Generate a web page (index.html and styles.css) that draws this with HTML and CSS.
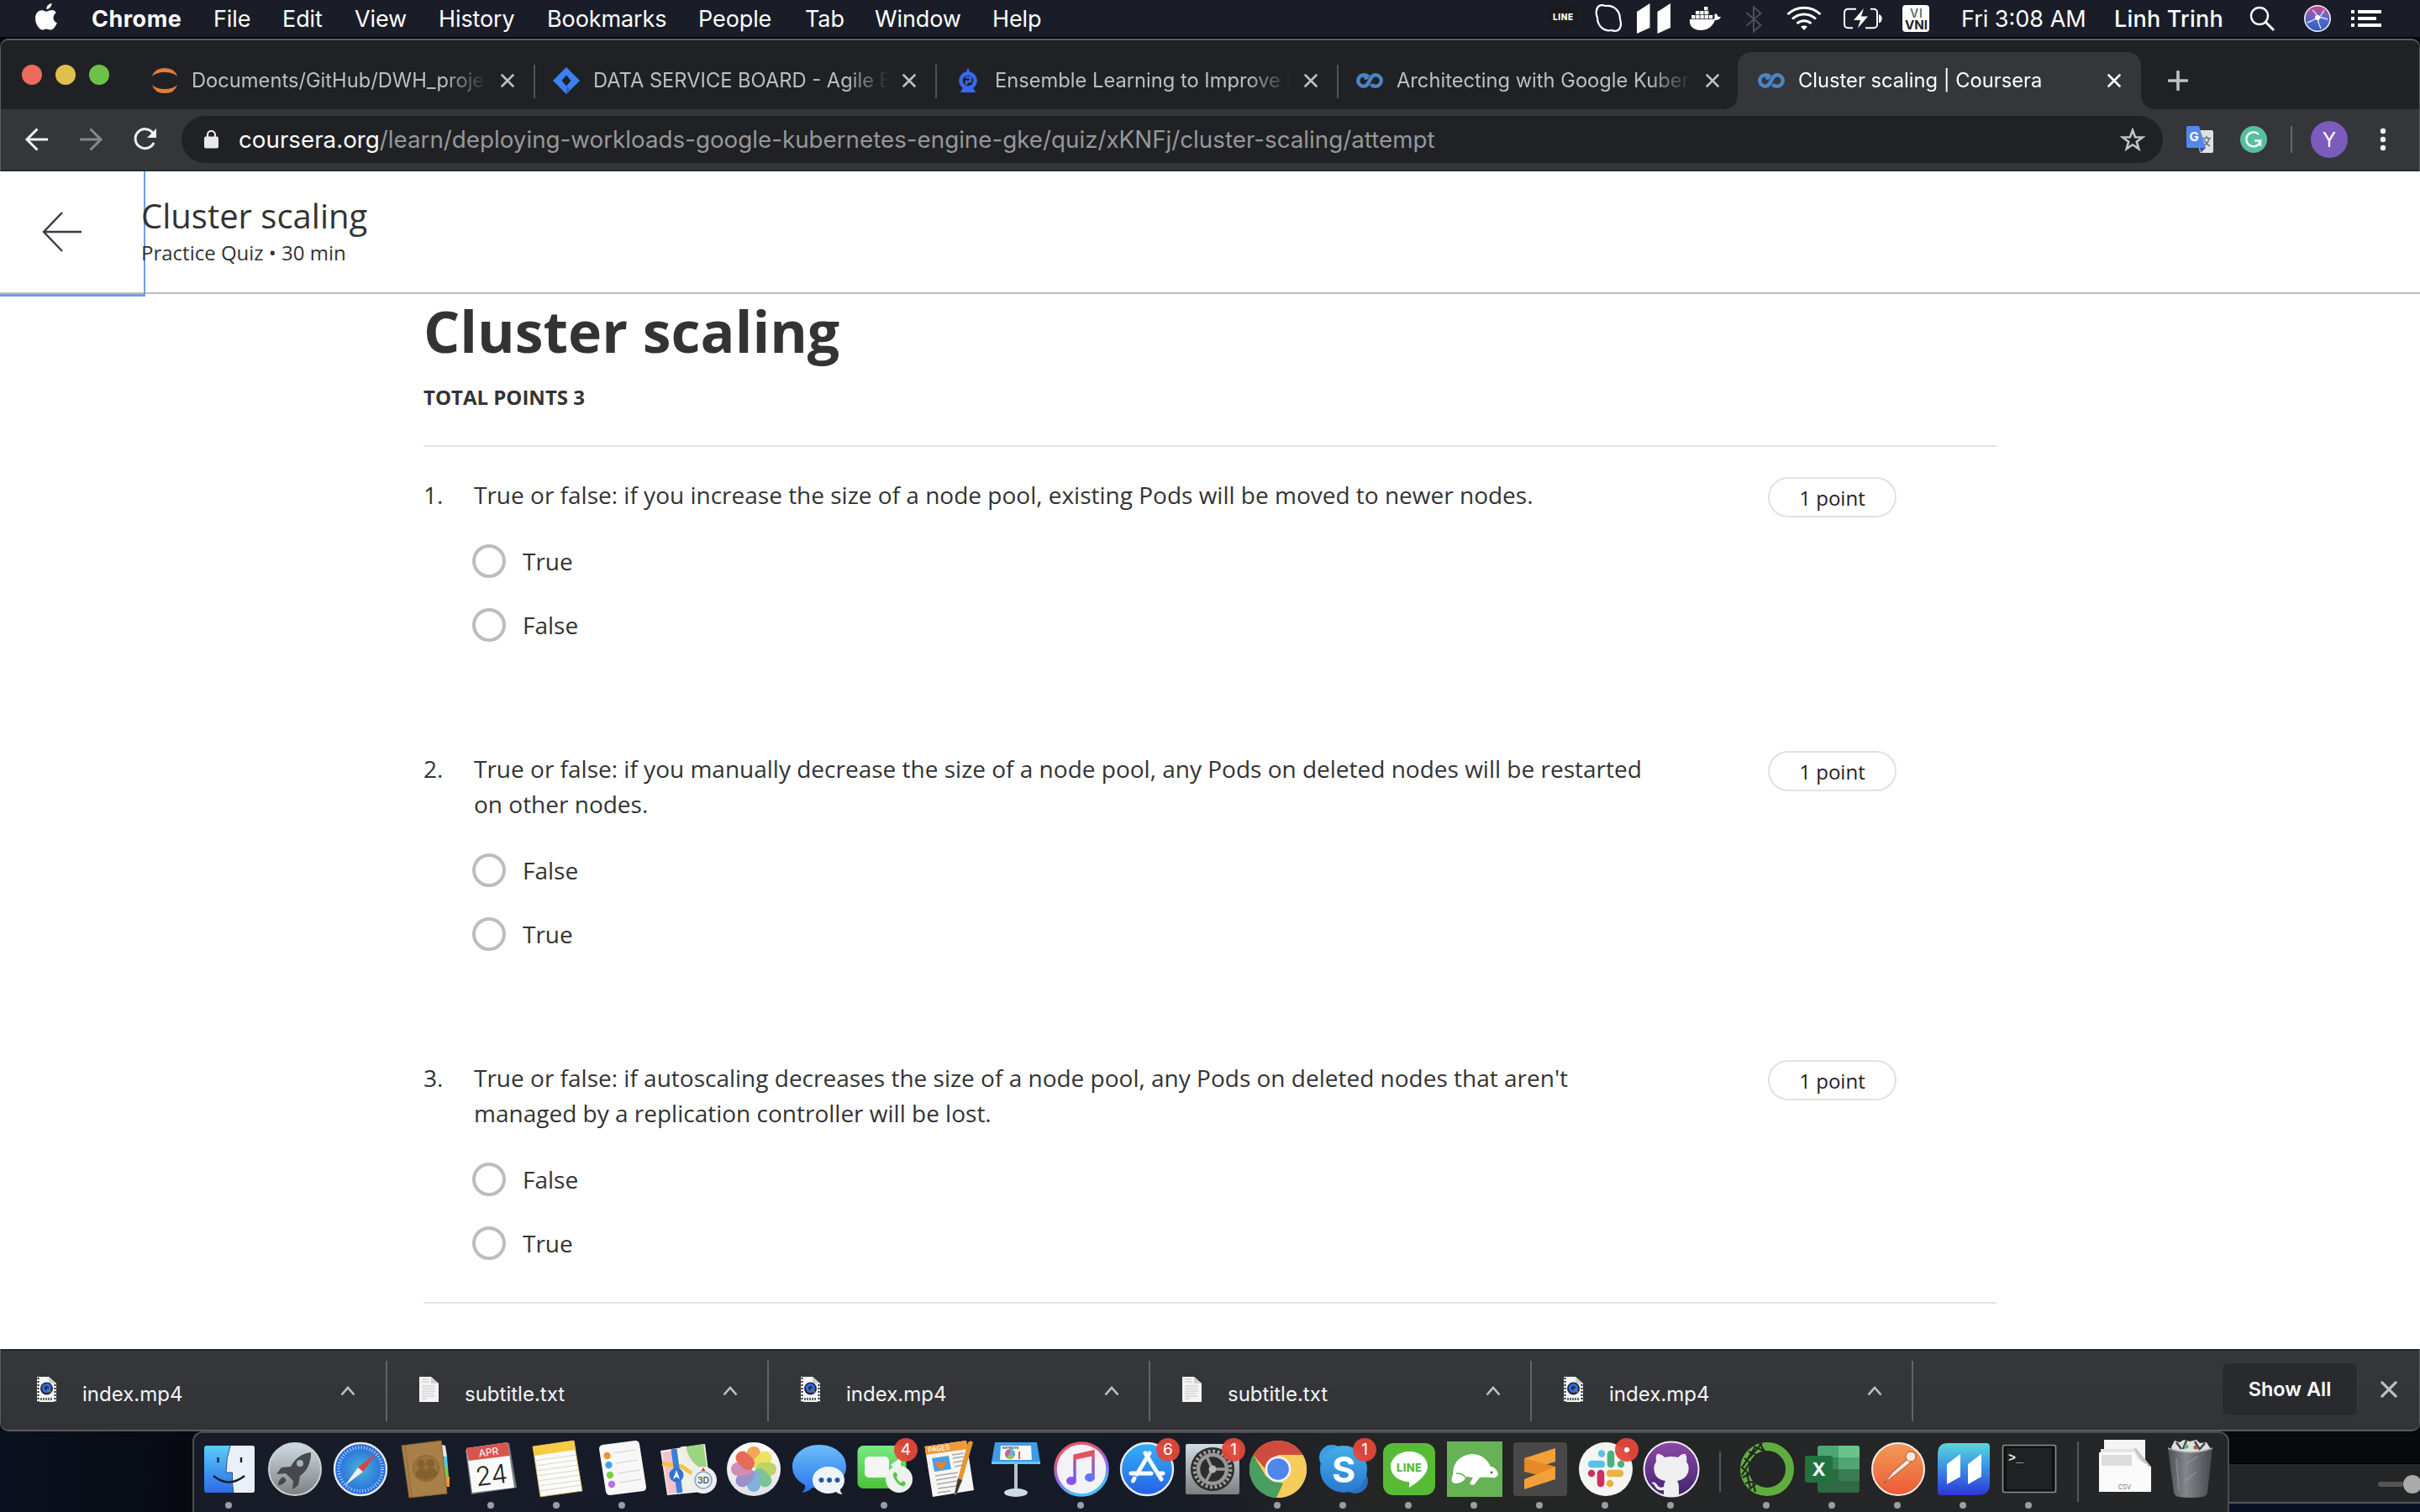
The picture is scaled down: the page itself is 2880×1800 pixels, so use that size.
FILE: index.html
```html
<!DOCTYPE html>
<html lang="en">
<head>
<meta charset="utf-8">
<title>Cluster scaling | Coursera</title>
<link rel="stylesheet" href="styles.css">
</head>
<body>
<svg class="defs" width="0" height="0" aria-hidden="true">
  <defs>
    <linearGradient id="g-finder" x2="0" y2="1"><stop stop-color="#5acdfa"/><stop offset="1" stop-color="#2a6be8"/></linearGradient>
    <linearGradient id="g-silver" x2="0" y2="1"><stop stop-color="#cfdde3"/><stop offset="1" stop-color="#7d7f80"/></linearGradient>
    <radialGradient id="g-safari"><stop stop-color="#4ab3d6"/><stop offset="1" stop-color="#2467dd"/></radialGradient>
    <linearGradient id="g-blue" x2="0" y2="1"><stop stop-color="#6cbff8"/><stop offset="1" stop-color="#2872ee"/></linearGradient>
    <linearGradient id="g-green" x2="0" y2="1"><stop stop-color="#76ea83"/><stop offset="1" stop-color="#4cc237"/></linearGradient>
    <linearGradient id="g-white" x2="0" y2="1"><stop stop-color="#fff"/><stop offset="1" stop-color="#dfe1e4"/></linearGradient>
    <linearGradient id="g-ring" x2="0.4" y2="1"><stop stop-color="#ee5264"/><stop offset=".3" stop-color="#e05a76"/><stop offset=".6" stop-color="#9c62f0"/><stop offset="1" stop-color="#45c0f5"/></linearGradient>
    <linearGradient id="g-note" x2="0" y2="1"><stop stop-color="#ee4b5f"/><stop offset=".6" stop-color="#8a55dd"/><stop offset="1" stop-color="#5a6cf0"/></linearGradient>
    <linearGradient id="g-store" x2="0" y2="1"><stop stop-color="#35b2f6"/><stop offset="1" stop-color="#2560e6"/></linearGradient>
    <linearGradient id="g-skype" x2="0" y2="1"><stop stop-color="#45b0e8"/><stop offset="1" stop-color="#2878cf"/></linearGradient>
    <linearGradient id="g-purple" x2="0" y2="1"><stop stop-color="#8f48a8"/><stop offset="1" stop-color="#40246e"/></linearGradient>
    <linearGradient id="g-postman" x2="0" y2="1"><stop stop-color="#f39b58"/><stop offset="1" stop-color="#ec5a36"/></linearGradient>
    <linearGradient id="g-mm" x2="0" y2="1"><stop stop-color="#5ad8dc"/><stop offset=".5" stop-color="#3a8be6"/><stop offset="1" stop-color="#2b37d4"/></linearGradient>
    <linearGradient id="g-trash" x2="1" y2="0"><stop stop-color="#4c5054"/><stop offset=".4" stop-color="#83878b"/><stop offset="1" stop-color="#45484c"/></linearGradient>
    <linearGradient id="g-siri" x2="0" y2="1"><stop stop-color="#d8457e"/><stop offset=".45" stop-color="#6a63c8"/><stop offset="1" stop-color="#2c5fc0"/></linearGradient>
    <symbol id="close" viewBox="0 0 16 16"><path d="M1.500 1.500l13 13M14.500 1.500l-13 13" stroke="currentColor" stroke-width="2.600" stroke-linecap="round"/></symbol>
    <symbol id="coursera" viewBox="0 0 32 18"><path d="M15 4.500C13 2.600 11 2.200 9 2.200a6.800 6.800 0 0 0 0 13.600c8 0 6-13.600 14-13.600a6.800 6.800 0 0 1 0 13.600c-2.400 0-4-.8-5.300-2.400M13.800 6.700C12.500 5.500 11 5 9.200 6" fill="none" stroke="#4a85c5" stroke-width="4.400"/></symbol>
    <symbol id="chevron" viewBox="0 0 18 12"><path d="M1.500 10.500L9 2l7.500 8.500" fill="none" stroke="#c0c1c4" stroke-width="2.600"/></symbol>
    <symbol id="mp4" viewBox="0 0 23 30"><path d="M0 0h14l9 8v22H0z" fill="#f5f5f5"/><path d="M14 0v8h9z" fill="#cfcfcf"/><path d="M1.500 1v29M21.500 9v21" stroke="#222" stroke-width="2" stroke-dasharray="2 2"/><circle cx="11.500" cy="14" r="7.500" fill="#26282e"/><circle cx="11.500" cy="13.500" r="4" fill="none" stroke="#2a6cf0" stroke-width="3"/><path d="M12 14l5 5" stroke="#68727d" stroke-width="2"/><path d="M4 26.500h15" stroke="#666" stroke-width="3" stroke-dasharray="2 1"/></symbol>
    <symbol id="txt" viewBox="0 0 23 30"><path d="M0 0h14l9 8v22H0z" fill="#f4f4f4"/><path d="M14 0v8h9z" fill="#cfcfcf"/><path d="M3 3h8M3 6h9M3 11h16M3 14h15M3 17h16M3 20h14M3 23h16M3 26h6" stroke="#c4c4c4" stroke-width="1"/></symbol>
  </defs>
</svg>

<header class="menubar">
  <svg class="apple" viewBox="42 0 67 44" width="67" height="44"><path d="M61.500 4c.3 3.500-2.700 7-6.200 7C55 7.500 58 4.400 61.500 4zM66.800 15.300c-5 3.200-4 9.900 1 12C66.500 31 63.500 35.500 60.500 35.500c-2 0-2.800-1.100-5.100-1.100s-3.200 1.100-5.100 1.100C46.500 35.500 42 28 42 22c0-6.500 4-9.700 7.800-9.700 2.300 0 4 1.400 5.600 1.400 1.500 0 3.600-1.600 6.400-1.600 2 0 3.900 1.200 5 3.200z" fill="#fff"/></svg>
  <nav class="menus">
    <span class="app-name">Chrome</span><span>File</span><span>Edit</span><span>View</span><span>History</span><span>Bookmarks</span><span>People</span><span>Tab</span><span>Window</span><span>Help</span>
  </nav>
  <div class="status">
    <svg viewBox="1840 0 50 44" width="50" height="44"><path d="M1860 5c10 0 18 6 18 14 0 7-9 14-18 21v-7c-10 0-18-6-18-14s8-14 18-14z" fill="#1b1b1b"/><text x="1848" y="23.500" class="tiny-line" textLength="24">LINE</text></svg>
    <svg viewBox="1890 0 50 44" width="50" height="44"><path d="M1903 7c4-2 7 0 8 0 10-1 17 6 17 16 1 3 2 6 0 10-2 5-8 4-10 3-10 2-17-6-17-15-2-4-2-11 2-14z" fill="none" stroke="#fff" stroke-width="2.200"/></svg>
    <svg viewBox="1940 0 60 44" width="60" height="44"><path d="M1948 14l15.500-10v29l-15.500 7zM1972.500 14l15.500-10v29l-15.500 7z" fill="#fff"/></svg>
    <svg viewBox="2000 0 60 44" width="60" height="44"><path d="M2011 23h28c2-1 2-3 1-5l2-2c2 1 2 3 3 4h3c-1 3-4 4-7 4-3 8-9 12-17 12-10 0-14-6-13-13z" fill="#fff"/><path d="M2013 20.200h26M2018 15.200h16M2028 10.200h5" stroke="#fff" stroke-width="4.200" stroke-dasharray="4.400 .8"/></svg>
    <svg viewBox="2060 0 50 44" width="50" height="44"><path d="M2078.500 15l17 15-8.500 7.500V8.500l8.500 7.500-17 14.500" fill="none" stroke="#4c4f57" stroke-width="2"/></svg>
    <svg viewBox="2110 0 70 44" width="70" height="44"><g fill="none" stroke="#fff" stroke-width="3"><path d="M2127.500 17c11-10.500 28-10.500 39 0M2133 22.500c8-7.500 20-7.500 28 0M2138.500 28c5-4.500 12-4.500 17 0"/></g><path d="M2143 31.800c3-1.800 5-1.800 8 0l-4 4.200z" fill="#fff"/></svg>
    <svg viewBox="2180 0 70 44" width="70" height="44"><g fill="none" stroke="#fff" stroke-width="2"><path d="M2209 10.800h-10a4 4 0 0 0-4 4v14.500a4 4 0 0 0 4 4h6M2226 10.800h4a4 4 0 0 1 4 4v14.500a4 4 0 0 1-4 4h-10"/></g><path d="M2218 10l-12 14h8l-3 9.500 12-14h-8z" fill="#fff"/><path d="M2236 17c5 1.500 5 9 0 10.500z" fill="#fff"/></svg>
    <svg viewBox="2250 0 85 44" width="85" height="44"><rect x="2264" y="6" width="32" height="32" rx="4" fill="#fff"/><text x="2273" y="20.500" class="ime-top" textLength="15">VI</text><text x="2267" y="35" class="ime-bottom" textLength="27" lengthAdjust="spacingAndGlyphs">VNI</text></svg>
    <span class="clock">Fri 3:08 AM</span><span class="user">Linh Trinh</span>
    <svg viewBox="2670 0 60 44" width="60" height="44"><circle cx="2689" cy="19" r="10" fill="none" stroke="#fff" stroke-width="2.400"/><path d="M2696.500 26.500l9.500 9.500" stroke="#fff" stroke-width="3"/></svg>
    <svg viewBox="2730 0 60 44" width="60" height="44"><circle cx="2758" cy="22" r="15.200" fill="url(#g-siri)" stroke="#f1eff4" stroke-width="1.600"/><path d="M2746 27q9-4 12-6 4-1 12 2M2752 12q6 5 6 9 1 7 4 13M2758 21q4-1 8-9" stroke="#bff2f2" stroke-width="1.500" fill="none"/><circle cx="2758" cy="21" r="3" fill="#fff"/></svg>
    <svg viewBox="2790 0 90 44" width="90" height="44"><path d="M2798 14h4M2798 22h4M2798 30h4M2806 14h28M2806 22h22M2806 30h28" stroke="#fff" stroke-width="4"/></svg>
  </div>
</header>

<main class="window">
  <div class="tabstrip">
    <div class="lights"><i class="light red"></i><i class="light yellow"></i><i class="light green"></i></div>
    <div class="tab">
      <svg class="fav" viewBox="0 0 32 32"><path d="M1 11Q4 1 16 1t15 10Q26 6 16 6T1 11zM1 21q3 10 15 10t15-10q-5 5-15 5T1 21z" fill="#e57c3a"/></svg>
      <span class="tab-title">Documents/GitHub/DWH_project</span><svg class="x"><use href="#close"/></svg>
    </div>
    <div class="tab sep">
      <svg class="fav" viewBox="0 0 32 32"><path d="M16 0l16 16-16 16L0 16z" fill="#3b82f0"/><path d="M16 9.500l5.500 6.500-5.500 6.500-5.500-6.500z" fill="#202124"/><path d="M16 22.500l5 5-5 4.500z" fill="#2560c8"/></svg>
      <span class="tab-title">DATA SERVICE BOARD - Agile Board</span><svg class="x"><use href="#close"/></svg>
    </div>
    <div class="tab sep">
      <svg class="fav" viewBox="0 0 32 32"><path d="M16 2v4" stroke="#3869ef" stroke-width="3"/><circle cx="16" cy="16" r="8.500" fill="none" stroke="#3869ef" stroke-width="4.500"/><path d="M13 12h6v5h-5v4" fill="none" stroke="#3869ef" stroke-width="2.500"/><path d="M7 30l3-6h12l3 6z" fill="#3869ef"/></svg>
      <span class="tab-title">Ensemble Learning to Improve Machine</span><svg class="x"><use href="#close"/></svg>
    </div>
    <div class="tab sep">
      <svg class="fav"><use href="#coursera"/></svg>
      <span class="tab-title">Architecting with Google Kubernetes</span><svg class="x"><use href="#close"/></svg>
    </div>
    <div class="tab active">
      <svg class="fav"><use href="#coursera"/></svg>
      <span class="tab-title">Cluster scaling | Coursera</span><svg class="x"><use href="#close"/></svg>
    </div>
    <svg class="plus" viewBox="0 0 24 24"><path d="M12 1.500v21M1.500 12h21" stroke="#bfc1c5" stroke-width="3.600" stroke-linecap="round"/></svg>
  </div>

  <div class="toolbar">
    <svg viewBox="1 130 215 72" width="215" height="72"><g fill="none" stroke-width="3"><path d="M57 166H33M44.500 153.500L32 166l12.500 12.500" stroke="#f1f1f1"/><path d="M95 166h24M107.500 153.500L120 166l-12.500 12.500" stroke="#87888b"/><path d="M182 158.500A11.500 11.500 0 1 0 183 170" stroke="#f1f1f1"/></g><path d="M186 153v11h-11z" fill="#f1f1f1"/></svg>
    <div class="omnibox">
      <svg class="lock" viewBox="0 0 17 22"><rect y="7.500" width="17" height="14" rx="2" fill="#e8e8e9"/><path d="M4 9V5.500a4.500 4.500 0 0 1 9 0V9" fill="none" stroke="#e8e8e9" stroke-width="2.200"/></svg>
      <span class="url"><b class="host">coursera.org</b><span class="path">/learn/deploying-workloads-google-kubernetes-engine-gke/quiz/xKNFj/cluster-scaling/attempt</span></span>
      <svg class="star" viewBox="0 0 30 28"><path d="M15 3l3 8.300 8.800.2-7 5.300 2.500 8.500-7.300-5-7.300 5 2.500-8.500-7-5.300 8.800-.2z" fill="none" stroke="#c3c4c7" stroke-width="2.600"/></svg>
    </div>
    <svg viewBox="2574 130 305 72" width="305" height="72"><path d="M2614 155h18a2 2 0 0 1 2 2v23a2 2 0 0 1-2 2h-14z" fill="#e0e0e0"/><path d="M2602 152a2 2 0 0 1 2-2h13l8 26h-21a2 2 0 0 1-2-2z" fill="#5488ec"/><path d="M2618 176h7l-6 6z" fill="#3a4bb5"/><text x="2605.500" y="168" class="g-text">G</text><path d="M2621 164.500h10M2626 162v2.500M2629 165q-1 5-6 8.500M2623 166q2 5 7 8" stroke="#607d8b" stroke-width="1.600" fill="none"/><circle cx="2682" cy="166" r="16" fill="#58bf9c"/><path d="M2688 160a8.500 8.500 0 1 0 2.200 7.500h-7M2690 174v-6.500" fill="none" stroke="#fff" stroke-width="2.400"/><path d="M2727 150v32" stroke="#67686b" stroke-width="2"/><circle cx="2772" cy="166" r="22" fill="#7b5bbd"/><text x="2772" y="174.500" class="avatar" text-anchor="middle">Y</text><g fill="#f4f4f4"><circle cx="2836" cy="156" r="3.200"/><circle cx="2836" cy="166" r="3.200"/><circle cx="2836" cy="176" r="3.200"/></g></svg>
  </div>

  <div class="page">
    <div class="quiz-header">
      <div class="back"><svg viewBox="0 0 48 48" width="48" height="48"><path d="M47 24H2M24 1L2 24l22 23" fill="none" stroke="#373a45" stroke-width="2.400"/></svg></div>
      <div class="quiz-id"><div class="quiz-name">Cluster scaling</div><div class="quiz-meta">Practice Quiz • 30 min</div></div>
    </div>
    <div class="quiz">
      <h1>Cluster scaling</h1>
      <div class="total">TOTAL POINTS 3</div>
      <section class="questions">
        <article class="question">
          <span class="num">1.</span>
          <div class="body">
            <p>True or false: if you increase the size of a node pool, existing Pods will be moved to newer nodes.</p>
            <label class="option"><i></i>True</label>
            <label class="option"><i></i>False</label>
          </div>
          <span class="points">1 point</span>
        </article>
        <article class="question">
          <span class="num">2.</span>
          <div class="body">
            <p>True or false: if you manually decrease the size of a node pool, any Pods on deleted nodes will be restarted<br>on other nodes.</p>
            <label class="option"><i></i>False</label>
            <label class="option"><i></i>True</label>
          </div>
          <span class="points">1 point</span>
        </article>
        <article class="question">
          <span class="num">3.</span>
          <div class="body">
            <p>True or false: if autoscaling decreases the size of a node pool, any Pods on deleted nodes that aren't<br>managed by a replication controller will be lost.</p>
            <label class="option"><i></i>False</label>
            <label class="option"><i></i>True</label>
          </div>
          <span class="points">1 point</span>
        </article>
      </section>
    </div>
  </div>

  <footer class="downloads">
    <div class="download"><svg class="file"><use href="#mp4"/></svg><span>index.mp4</span><svg class="chev"><use href="#chevron"/></svg></div>
    <div class="download"><svg class="file"><use href="#txt"/></svg><span>subtitle.txt</span><svg class="chev"><use href="#chevron"/></svg></div>
    <div class="download"><svg class="file"><use href="#mp4"/></svg><span>index.mp4</span><svg class="chev"><use href="#chevron"/></svg></div>
    <div class="download"><svg class="file"><use href="#txt"/></svg><span>subtitle.txt</span><svg class="chev"><use href="#chevron"/></svg></div>
    <div class="download"><svg class="file"><use href="#mp4"/></svg><span>index.mp4</span><svg class="chev"><use href="#chevron"/></svg></div>
    <button class="show-all">Show All</button>
    <svg class="close-bar"><use href="#close"/></svg>
  </footer>
</main>

<div class="desktop">
  <div class="dock">
    <div class="app run"><svg viewBox="0 0 78 96"><rect x="9" y="17" width="60" height="56" rx="3" fill="url(#g-finder)"/><path d="M40 17h26a3 3 0 0 1 3 3v50a3 3 0 0 1-3 3H44q-2-10-1.500-24H35Q35 32 40 17z" fill="#eaf0f8"/><path d="M40 17Q35 32 35 49h7.500Q42 63 44 73" fill="none" stroke="#2a4f86" stroke-width="1"/><path d="M25.500 31v6M53 31v6" stroke="#15202c" stroke-width="2.400"/><path d="M20 53q18 15 37 0" fill="none" stroke="#15202c" stroke-width="2.400"/></svg></div>
    <div class="app"><svg viewBox="0 0 78 96"><circle cx="39" cy="45" r="31" fill="url(#g-silver)" stroke="#c9d3d6" stroke-width="2"/><path d="M58 25q-16 2-24 17l-11 1-6 8 11-1 9 9-1 10 7-5 2-11q13-9 13-28z" fill="#45494b"/><circle cx="45" cy="38" r="4" fill="#a9b2b6"/><path d="M25 54q-6 4-6 10 6 0 10-6z" fill="#45494b"/></svg></div>
    <div class="app"><svg viewBox="0 0 78 96"><circle cx="39" cy="45" r="31" fill="url(#g-safari)" stroke="#e5e8ec" stroke-width="2.400"/><circle cx="39" cy="45" r="26" fill="none" stroke="#b8dcf5" stroke-width="4" stroke-dasharray="1 2.400"/><path d="M59 25L42 48l-6-5z" fill="#e0413a"/><path d="M20 65l22-17-6-5z" fill="#f1f1f1"/></svg></div>
    <div class="app"><svg viewBox="0 0 78 96"><path d="M58 16l4 1 2 13h-6z" fill="#e5e5e5"/><path d="M60 30h4l1 12h-5z" fill="#5cc3e8"/><path d="M61 42h4l1 12h-5z" fill="#6fd158"/><path d="M62 54h5v12h-5z" fill="#e59a35"/><path d="M10 17l47-6 7 63-45 5z" fill="#a98148" stroke="#8a6636"/><path d="M14 17l8 61" stroke="#8a6636"/><circle cx="39" cy="44" r="15.500" fill="#9a733d" stroke="#86622f"/><circle cx="33" cy="39" r="5" fill="#85602f"/><circle cx="44" cy="38" r="5" fill="#85602f"/><path d="M26 53q2-9 8-9 4 0 5 3 1-4 6-4 5 0 8 8-13 12-27 2z" fill="#85602f"/></svg></div>
    <div class="app run"><svg viewBox="0 0 78 96"><path d="M8 22l52-8 9 53-54 8z" fill="#6f7a83"/><path d="M9 20l49-7 8 54-50 6z" fill="#fafafa"/><path d="M9 20l49-7 2.500 16L11.500 35z" fill="#d8544f"/><g transform="rotate(-7 38 45)"><text x="38" y="29" class="cal-m" text-anchor="middle">APR</text><text x="38" y="63" class="cal-d" text-anchor="middle">24</text></g></svg></div>
    <div class="app run"><svg viewBox="0 0 78 96"><path d="M10 18l49-7 10 60-50 7z" fill="#fbfbf7" stroke="#c8a83c" stroke-width=".8"/><path d="M10 18l49-7 2 11-49 7z" fill="#f7cc45"/><path d="M12 35l50-7M13 41l50-7M14 47l50-7M15 53l50-7M16 59l50-7M17 65l50-7M18 71l50-7" stroke="#d5d5d2"/></svg></div>
    <div class="app run"><svg viewBox="0 0 78 96"><path d="M15 16l39-5q4 0 5 4l8 51q0 4-3 5l-40 5q-4 0-5-4L11 21q0-4 4-5z" fill="#f7f7f8"/><g stroke="#cfcfcf"><path d="M28 26l26-4M31 38l26-4M33 50l26-4M35 61l26-4"/></g><circle cx="20.500" cy="29" r="4.200" fill="#ee9433"/><circle cx="22.500" cy="40" r="4.200" fill="#3fa3f2"/><circle cx="24" cy="52" r="4.200" fill="#78cf44"/><circle cx="26" cy="63" r="4.200" fill="#bb72dc"/></svg></div>
    <div class="app"><svg viewBox="0 0 78 96"><path d="M6 23l53-8 7 56-52 5z" fill="#f2f0ea"/><path d="M8 25l14-2 8 50-15 1z" fill="#f3c1c9"/><path d="M30 19l27-4 6 40q-26-6-33-36z" fill="#9bd581"/><path d="M33 18q4 26 30 33" fill="none" stroke="#efece4" stroke-width="7"/><path d="M8 38l24 4 33 24" fill="none" stroke="#f4c443" stroke-width="5"/><path d="M22 21l7 52" stroke="#3c7edb" stroke-width="7"/><circle cx="25" cy="52" r="8.500" fill="#2f73d4"/><path d="M25 46l4 11-4-3-4 3z" fill="#fff"/><circle cx="57" cy="58" r="16" fill="#eceff1"/><circle cx="57" cy="58" r="10" fill="none" stroke="#86a9b4" stroke-width="1.500"/><path d="M57 43l2.500 4h-5z" fill="#dc3c31"/><text x="57" y="62" class="maps-3d" text-anchor="middle">3D</text></svg></div>
    <div class="app"><svg viewBox="0 0 78 96"><circle cx="39" cy="45" r="32" fill="url(#g-white)"/><g transform="translate(39 45)" opacity=".86"><rect x="-8" y="-27" width="16" height="25" rx="8" fill="#f29a38"/><rect x="-8" y="-27" width="16" height="25" rx="8" fill="#ece046" transform="rotate(45)"/><rect x="-8" y="-27" width="16" height="25" rx="8" fill="#b5d151" transform="rotate(90)"/><rect x="-8" y="-27" width="16" height="25" rx="8" fill="#6bbd8a" transform="rotate(135)"/><rect x="-8" y="-27" width="16" height="25" rx="8" fill="#6fa9d8" transform="rotate(180)"/><rect x="-8" y="-27" width="16" height="25" rx="8" fill="#8f83c4" transform="rotate(225)"/><rect x="-8" y="-27" width="16" height="25" rx="8" fill="#c67fae" transform="rotate(270)"/><rect x="-8" y="-27" width="16" height="25" rx="8" fill="#e5553c" transform="rotate(315)"/></g></svg></div>
    <div class="app"><svg viewBox="0 0 78 96"><path d="M39 16c18 0 32 11 32 26S57 68 39 68q-4 0-8-1-5 5-13 6 5-4 4-9Q7 56 7 42c0-15 14-26 32-26z" fill="url(#g-blue)"/><path d="M50 42c11 0 19 7 19 16q0 7-5 11 0 4 3 6-5 0-8-3-4 2-9 2c-11 0-19-7-19-16s8-16 19-16z" fill="#eef4fa"/><g fill="#2758a0"><circle cx="41.500" cy="58" r="3"/><circle cx="51" cy="58" r="3"/><circle cx="60.500" cy="58" r="3"/></g></svg></div>
    <div class="app run"><svg viewBox="0 0 78 96"><rect x="6.500" y="17" width="58" height="51" rx="7" fill="url(#g-green)"/><rect x="15" y="30" width="29" height="25" rx="5" fill="#f3f6f3"/><path d="M46 40l12-9v22z" fill="#f3f6f3"/><circle cx="56" cy="57" r="16" fill="#eef1ed"/><path d="M49 50q3-4 5 2l-1 3q2 5 5 6l3-2q5 3 1 6-5 1-10-6-4-6-3-9z" fill="#55c53f"/></svg><span class="badge">4</span></div>
    <div class="app"><svg viewBox="0 0 78 96"><path d="M8.500 18L58 11l9 59-49 8z" fill="#f6f6f4"/><path d="M8.500 18L58 11l1.500 10L10 28z" fill="#f19a38"/><text x="13" y="25" class="pages-t" transform="rotate(-8 13 25)">PAGES</text><path d="M17 32l20-3 3 16-20 3z" fill="#4a9fe5"/><path d="M21 35l7 3 6-4-2 8-4 4-4-3z" fill="#ef7f2c"/><path d="M41 28l14-2M42 32l13-2M43 37l12-2M44 42l10-2M21 53l27-4M22 58l25-4M23 63l24-4M24 68l22-3M24 73l15-2" stroke="#a9a9a9" stroke-width="1.300"/><path d="M60 13q3-3 6 0L53 58l-8 18-1-1 4-19z" fill="#e69532"/><path d="M48 56l5 2-6 15-3 1z" fill="#3a3a3c"/></svg></div>
    <div class="app"><svg viewBox="0 0 78 96"><path d="M39 38v35" stroke="#b8c3cb" stroke-width="4"/><ellipse cx="39" cy="73" rx="14" ry="5" fill="#cfdbe4"/><path d="M14 13h50l4 24H10z" fill="#3d9be8"/><path d="M10 36h58v3H10z" fill="#6bc5f3"/><path d="M21 17h36l1 17H20z" fill="#f7f8f8"/><circle cx="32" cy="27" r="6" fill="#d95a8a"/><path d="M32 27v-6a6 6 0 0 1 5 9z" fill="#58b4e4"/><path d="M32 27l5 3a6 6 0 0 1-9 1z" fill="#8bcc57"/><text x="23" y="20.500" class="key-t">KEYNOTE</text><path d="M43 24v9" stroke="#e25b50" stroke-width="2"/></svg></div>
    <div class="app run"><svg viewBox="0 0 78 96"><circle cx="39" cy="45" r="31" fill="#f3f2f6" stroke="url(#g-ring)" stroke-width="3.600"/><path d="M31 58V29l22-5v29" fill="none" stroke="url(#g-note)" stroke-width="3.400"/><path d="M30 28l24-5v6l-24 5z" fill="#e4525f"/><ellipse cx="27" cy="59" rx="6" ry="5" fill="#8853ea"/><ellipse cx="49" cy="55" rx="6" ry="5" fill="#6373ec"/></svg></div>
    <div class="app"><svg viewBox="0 0 78 96"><circle cx="39" cy="45" r="31" fill="url(#g-store)" stroke="#e6eaef" stroke-width="2.400"/><g stroke="#f7f8fb" stroke-width="5" stroke-linecap="round"><path d="M42 26L27 51M37 26l19 31M20 50h24M52 50h6M24 56l-1.500 3"/></g></svg><span class="badge">6</span></div>
    <div class="app"><svg viewBox="0 0 78 96"><rect x="7" y="15" width="64" height="60" rx="2" fill="url(#g-silver)"/><circle cx="39" cy="45" r="26" fill="#2c2d2e"/><circle cx="39" cy="45" r="21.500" fill="none" stroke="#a0a09e" stroke-width="4" stroke-dasharray="3 2.600"/><circle cx="39" cy="45" r="17" fill="none" stroke="#989896" stroke-width="4.500"/><path d="M39 45L32 30M39 45h17M39 45l-8 15" stroke="#989896" stroke-width="3.500"/><circle cx="39" cy="45" r="4.500" fill="#b5b5b2"/></svg><span class="badge">1</span></div>
    <div class="app run"><svg viewBox="0 0 78 96"><circle cx="39" cy="45" r="34" fill="#f6cd5a"/><path d="M9.500 28A34 34 0 0 1 68.500 28H39L24 45z" fill="#ce4b3d"/><path d="M9.500 28l15 25.500L39 60l6 2-8 17A34 34 0 0 1 9.500 28z" fill="#4a9e5f"/><path d="M39 28h29.500A34 34 0 0 1 37 79l17-26z" fill="#f6cd5a"/><circle cx="39" cy="45" r="15.500" fill="#f2f3f3"/><circle cx="39" cy="45" r="12.800" fill="#4f86ea"/></svg></div>
    <div class="app run"><svg viewBox="0 0 78 96"><circle cx="25" cy="31" r="15" fill="#3a9ede"/><circle cx="53" cy="59" r="15" fill="#2870c4"/><circle cx="39" cy="45" r="28" fill="url(#g-skype)"/><text x="39" y="61" class="skype" text-anchor="middle">S</text></svg><span class="badge">1</span></div>
    <div class="app run"><svg viewBox="0 0 78 96"><rect x="8" y="14" width="62" height="62" rx="12" fill="#58bb36"/><path d="M39 24c13 0 22 8 22 18 0 9-11 18-22 25v-7c-12 0-22-8-22-18s10-18 22-18z" fill="#fff"/><text x="39" y="47.500" class="line-t" text-anchor="middle" textLength="30">LINE</text></svg></div>
    <div class="app run"><svg viewBox="0 0 78 96"><rect x="6" y="12" width="66" height="66" fill="#67b157"/><path d="M13 52q0-22 22-25 16 0 23 15 6 0 9 9-2 5-8 4-10-1-14 0l-6 8q-4 2-6-1l4-7-8-1q-4 8-13 8-6-1-4-8z" fill="#fff"/><path d="M17 50q8 0 11 5" fill="none" stroke="#67b157" stroke-width="1.500"/><circle cx="59" cy="49" r="1.400" fill="#3c6e33"/></svg></div>
    <div class="app run"><svg viewBox="0 0 78 96"><rect x="7" y="13" width="64" height="64" rx="4" fill="#484848"/><path d="M20 32l37-12v16L20 48z" fill="#f4a03a"/><path d="M20 32v16l37 9V42z" fill="#e58a27"/><path d="M20 57l37-15v15L20 69z" fill="#f4a03a"/></svg></div>
    <div class="app run"><svg viewBox="0 0 78 96"><circle cx="39" cy="45" r="32" fill="#f5f5f5"/><g stroke-width="8.500" stroke-linecap="round"><path d="M22 39h12M34 26.500v.1" stroke="#5dc0e8"/><path d="M45 27v12M57 39v.1" stroke="#4fae80"/><path d="M56 50H44M44 62v.1" stroke="#e6b43f"/><path d="M33 62V50M22 50v.1" stroke="#ce2f5c"/></g></svg><span class="badge">•</span></div>
    <div class="app run"><svg viewBox="0 0 78 96"><circle cx="39" cy="45" r="32.500" fill="url(#g-purple)" stroke="#f1eff2" stroke-width="2"/><path d="M22 27q4-1 9 4 8-2 16 0 5-5 9-4 2 5 1 9 4 5 2 13-3 8-13 10 2 3 2 8v9q-9 3-18 0v-6q-8 1-10-4-2-4-5-5 5-2 8 4 3 3 7 1 0-4 2-7-11-2-13-10-2-8 2-13-1-5 1-9z" fill="#efeef0"/></svg></div>
    <i class="divider short"></i>
    <div class="app run"><svg viewBox="0 0 78 96"><circle cx="39" cy="45" r="27" fill="none" stroke="#60ad3f" stroke-width="10"/><path d="M30 14l6 10M23 18l14 6M17 24l12 5M12 32l10 8M8 42l11 10M10 55l12-7M13 62l12-3M18 69l9-8M33 14l-16 18M24 20l-14 22M18 38L9 52M15 50l4 18M22 60l3 12" stroke="#222624" stroke-width="2.200"/></svg></div>
    <div class="app run"><svg viewBox="0 0 78 96"><rect x="21" y="17" width="50" height="56" rx="3" fill="#2f6a44"/><path d="M21 20a3 3 0 0 1 3-3h22v14H21z" fill="#4ca872"/><path d="M46 17h22a3 3 0 0 1 3 3v11H46z" fill="#66c48c"/><path d="M21 31h25v14H21z" fill="#3a8656"/><path d="M46 31h25v14H46z" fill="#4fa671"/><path d="M46 45h25v14H46z" fill="#3a7d51"/><rect x="6" y="29" width="33" height="32" rx="3" fill="#21723f"/><text x="22.500" y="53" class="excel" text-anchor="middle">X</text></svg></div>
    <div class="app run"><svg viewBox="0 0 78 96"><circle cx="39" cy="45" r="31" fill="url(#g-postman)" stroke="#f8ece4" stroke-width="2"/><path d="M55 36L35 52 22 62l10-13 18-16z" fill="#fbe9df" stroke="#a05130" stroke-width="1"/><circle cx="54" cy="30" r="6" fill="#fbe9df" stroke="#a05130"/></svg></div>
    <div class="app run"><svg viewBox="0 0 78 96"><path d="M20 14h46q4 0 4 4v44q0 14-14 14H12q-4 0-4-4V27q0-13 12-13z" fill="url(#g-mm)"/><path d="M19 39l16-12v27L19 63zM44 39l16-12v27L44 63z" fill="#fff"/></svg></div>
    <div class="app run"><svg viewBox="0 0 78 96"><rect x="7.500" y="16.500" width="63" height="56" rx="2" fill="#101010" stroke="#8d9090" stroke-width="1.600"/><rect x="12" y="20" width="54" height="49" fill="#202122"/><text x="14" y="36" class="term">&gt;_</text></svg></div>
    <i class="divider"></i>
    <div class="app"><svg viewBox="0 0 78 96"><path d="M14 10h49v50H14z" fill="#f4f4f4"/><path d="M10 21h42l14 17v30H10z" fill="#e4e4e4"/><path d="M8 25h42q5 12 20 17v30H8z" fill="#fafafa"/><path d="M11 28h36v13H11z" fill="#dcdcdc"/><path d="M50 20q5 16 20 22L52 20z" fill="#c5c5c5"/><text x="38.500" y="69" class="csv" text-anchor="middle">CSV</text></svg></div>
    <div class="app"><svg viewBox="0 0 78 96"><path d="M16 19l4-8 6 2 5-3 7 2 8-2 4 4 8-1 5 8-4 5H18z" fill="#dededc"/><path d="M22 13l6 8M34 11l-4 10M44 12l6 10M56 14l-6 7" stroke="#41464c" stroke-width="2.500"/><circle cx="34" cy="18" r="2.500" fill="#5ab978"/><circle cx="45" cy="19" r="2.500" fill="#b5583f"/><path d="M12 20q27 10 53 0l-6 53q-1 4-6 5-14 2-28 0-5-1-6-5z" fill="url(#g-trash)"/><path d="M12 20q27 10 53 0" fill="none" stroke="#a6aaae" stroke-width="1.500"/><path d="M22 32l3 38M34 38l14-8M32 60l14-12" stroke="#9da1a5" stroke-width="2" opacity=".5"/></svg></div>
  </div>
  <div class="behind"><div class="player"><i class="track"></i><i class="knob"></i></div></div>
</div>
</body>
</html>
```
FILE: styles.css
```css
* { box-sizing: border-box; }
html, body { margin: 0; width: 2880px; height: 1800px; overflow: hidden; }
body { display: flex; flex-direction: column; background: #060a12; font-family: Inter, "Liberation Sans", sans-serif; }
svg { display: block; flex: none; }
.defs { position: absolute; }

/* macOS menu bar */
.menubar { height: 46px; flex: none; display: flex; align-items: flex-start; padding-left: 42px; background: #1a1d27; border-bottom: 2px solid #05070c; color: #fff; font-size: 27px; line-height: 45px; }
.menus { display: grid; grid-template-columns: 145px 82px 86px 100px 129px 180px 127px 83px 140px 62px; width: 1134px; white-space: nowrap; letter-spacing: -.1px; }
.app-name { font-weight: 700; letter-spacing: .5px; }
.status { display: flex; margin-left: 597px; white-space: nowrap; }
.clock { width: 182px; letter-spacing: 0; margin-left: -1px; }
.user { width: 154px; letter-spacing: .2px; font-weight: 500; }
.tiny-line { font: 800 10px Inter, sans-serif; fill: #fff; }
.ime-top { font: 600 14px Inter, sans-serif; fill: #666a73; }
.ime-bottom { font: 700 15px Inter, sans-serif; fill: #20232c; }

/* Browser window */
.window { height: 1658px; flex: none; display: flex; flex-direction: column; border: solid #5b5c5e; border-width: 2px 1px 2px 1px; border-radius: 10px; background: #202124; }
.tabstrip { height: 82px; flex: none; display: flex; background: #202124; border-radius: 9px 9px 0 0; }
.lights { width: 156px; display: flex; gap: 16px; padding: 29px 0 0 25px; }
.light { width: 24px; height: 24px; border-radius: 50%; }
.red { background: #ed6a5e; }
.yellow { background: #e0c04c; }
.green { background: #6fc048; }
.tab { width: 478px; height: 68px; margin-top: 14px; display: flex; align-items: center; padding-left: 23px; color: #bdbfc3; position: relative; }
.tab.sep::before { content: ""; position: absolute; left: 0; top: 15px; width: 2px; height: 40px; background: #515256; }
.tab.active { width: 480px; background: #35363a; color: #fff; border-radius: 16px 16px 0 0; margin-left: -1px; padding-left: 24px; }
.tab.active::before, .tab.active::after { content: ""; position: absolute; bottom: 0; width: 16px; height: 16px; }
.tab.active::before { left: -16px; background: radial-gradient(circle at 0 0, transparent 15.500px, #35363a 16px); }
.tab.active::after { right: -16px; background: radial-gradient(circle at 100% 0, transparent 15.500px, #35363a 16px); }
.fav { width: 32px; height: 32px; margin-right: 16px; }
.tab-title { width: 350px; margin-right: 17px; overflow: hidden; white-space: nowrap; font-size: 23.700px; line-height: 40px; -webkit-mask-image: linear-gradient(90deg, #000 300px, transparent 352px); mask-image: linear-gradient(90deg, #000 300px, transparent 352px); }
.x { width: 16px; height: 16px; margin-left: 1px; }
.plus { width: 24px; height: 24px; margin: 36px 0 0 32px; }
.toolbar { height: 74px; flex: none; display: flex; background: #35363a; border-bottom: 2px solid #28292b; }
.omnibox { width: 2358px; height: 56px; margin-top: 8px; border-radius: 28px; background: #202124; display: flex; align-items: center; padding: 0 21px 0 27px; }
.lock { width: 17px; height: 22px; margin-right: 24px; }
.url { flex: 1; font-size: 27.750px; white-space: nowrap; color: #96989c; line-height: 57px; }
.host { font-weight: 400; color: #fff; }
.star { width: 30px; height: 28px; }
.g-text { font: 700 15px Inter, sans-serif; fill: #fff; }
.avatar { font: 400 24px Inter, sans-serif; fill: #fff; }

/* Quiz page */
.page { height: 1402px; flex: none; margin: 0 -1px; background: #fff; font-family: "Open Sans", "Liberation Sans", sans-serif; color: #333; }
.quiz-header { height: 146px; display: flex; border-bottom: 2px solid #bdbdbd; }
.back { width: 173px; height: 149px; flex: none; padding: 48px 0 0 50px; border: solid #6f9fe3; border-width: 0 2px 3px 0; }
.quiz-id { padding-top: 24px; margin-left: -5px; white-space: nowrap; }
.quiz-name { font-size: 40px; line-height: 58px; }
.quiz-meta { font-size: 24px; line-height: 30px; }
.quiz { width: 1872px; margin-left: 504px; }
h1 { margin: 0; padding-top: 1px; font-size: 68px; line-height: 86px; font-weight: 700; }
.total { margin: 18px 0 3px; height: 72px; font-size: 24px; line-height: 36px; font-weight: 700; }
.questions { height: 1022px; border-top: 2px solid #e1e1e1; border-bottom: 2px solid #e1e1e1; padding-top: 36px; }
.question { display: flex; height: 326px; }
.question:nth-child(2) { height: 368px; }
.question:nth-child(3) { height: 300px; }
.num { width: 60px; font-size: 28px; line-height: 42px; }
.body { width: 1540px; }
.body p { margin: 0 0 20px; font-size: 28px; line-height: 42px; white-space: nowrap; }
.option { display: flex; align-items: center; height: 76px; margin-left: -2px; font-size: 28px; }
.option i { width: 40px; height: 40px; border: 4px solid #bdbdbd; border-radius: 50%; margin-right: 20px; }
.points { width: 153px; height: 48px; border: 2px solid #e1e1e1; border-radius: 24px; color: #1f1f1f; font-size: 24px; line-height: 46px; text-align: center; }

/* Downloads shelf */
.downloads { flex: 1; border-top: 2px solid #252628; background: linear-gradient(#36373b, #323336); display: flex; color: #f5f5f6; border-radius: 0 0 9px 9px; }
.download { width: 454px; height: 72px; margin-top: 12px; display: flex; border-right: 2px solid #626366; padding-left: 38px; font-size: 24px; }
.download:first-child { width: 460px; padding-left: 43px; }
.file { width: 23px; height: 30px; margin-top: 19px; }
.download span { width: 307px; margin-left: 31px; line-height: 30px; padding-top: 25px; }
.chev { width: 18px; height: 12px; margin-top: 30px; }
.show-all { width: 162px; height: 64px; margin: 14px 0 0 367px; padding: 0 0 2px; background: #292a2d; border: 1px solid #3a3b3e; border-radius: 8px; color: #fff; font: 600 23.500px Inter, sans-serif; }
.close-bar { width: 20px; height: 20px; margin: 36px 0 0 27px; color: #bdbec1; }

/* Desktop and Dock */
.desktop { flex: 1; display: flex; padding-left: 229px; background: linear-gradient(90deg, #0a1120, #070a11 220px); }
.dock { width: 2424px; height: 110px; flex: none; display: flex; padding-left: 3px; border: 2px solid #4a4c50; border-radius: 12px; background: linear-gradient(90deg, #181c28, #151a27 1100px, #242525 1400px, #252627); }
.app { width: 78px; flex: none; position: relative; margin-top: -2px; }
.app svg { width: 78px; height: 96px; }
.run::after { content: ""; position: absolute; left: 34px; top: 84px; width: 8px; height: 8px; border-radius: 50%; background: #9a9da5; }
.badge { position: absolute; left: 50px; top: 8px; width: 28px; height: 28px; border-radius: 50%; background: rgba(226, 72, 58, .95); color: #fff; font-size: 19px; line-height: 28px; text-align: center; }
.divider { width: 36px; position: relative; flex: none; }
.divider::after { content: ""; position: absolute; left: 18px; top: 10px; width: 2px; height: 72px; background: #56585a; }
.divider.short::after { top: 22px; height: 48px; }
.behind { flex: 1; background: linear-gradient(#08090a 38px, #000 38px, #000 39px, #242526 39px, #242526 84px, #56575a 84px, #56575a 86px, #0a1124 86px); }
.player { display: flex; align-items: center; padding: 52px 0 0 177px; }
.track { width: 30px; height: 6px; border-radius: 3px; background: #555; flex: none; }
.knob { width: 22px; height: 22px; border-radius: 50%; background: #aaa; flex: none; }
.cal-m { font: 400 12px Inter, sans-serif; fill: #fff; }
.cal-d { font: 300 31px Inter, sans-serif; fill: #222; }
.maps-3d { font: 500 10.500px Inter, sans-serif; fill: #444; }
.pages-t { font: 500 8px Inter, sans-serif; fill: #fff; }
.key-t { font: 700 4px Inter, sans-serif; fill: #444; }
.skype { font: 700 43px Inter, sans-serif; fill: #fff; }
.line-t { font: 800 13px Inter, sans-serif; fill: #58bb36; }
.excel { font: 700 22px Inter, sans-serif; fill: #fff; }
.term { font: 700 15px "Liberation Mono", monospace; fill: #eee; }
.csv { font: 400 7.500px Inter, sans-serif; fill: #777; }
```
